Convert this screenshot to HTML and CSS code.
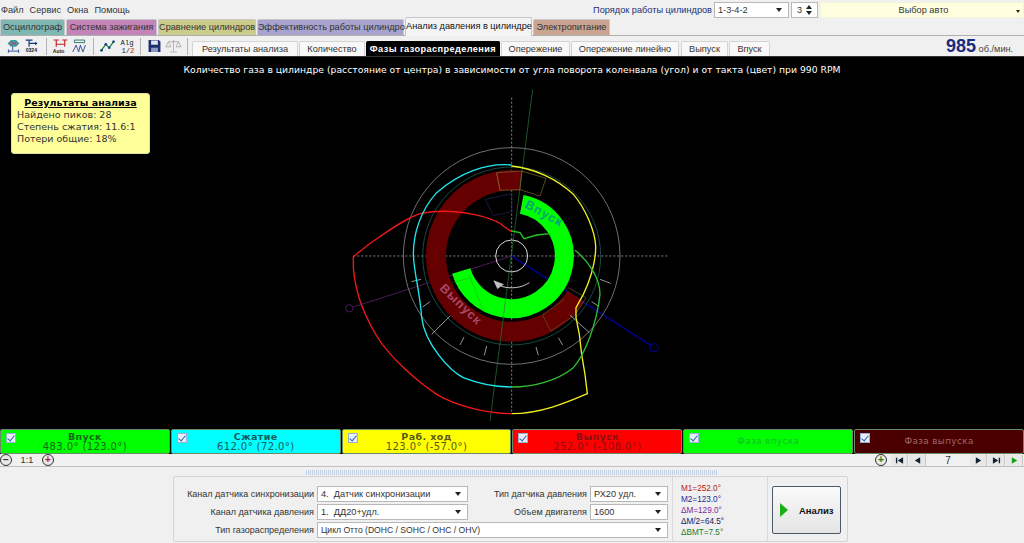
FILE: index.html
```html
<!DOCTYPE html>
<html lang="ru">
<head>
    <meta charset="UTF-8">
    <title>Анализ давления в цилиндре</title>
    <link rel="stylesheet" href="styles.css">
</head>
<body>
    <!-- menu + engine settings -->
    <div class="topbar">
        <div class="menu"><span>Файл</span><span>Сервис</span><span>Окна</span><span>Помощь</span></div>
        <div class="engine">
            <span class="engine-label">Порядок работы цилиндров</span>
            <div class="combo combo-order">1-3-4-2<i></i></div>
            <div class="spin">3<b class="spin-arrows"><i></i><i></i></b></div>
            <div class="combo combo-auto"><span>Выбор авто</span><i></i></div>
        </div>
    </div>

    <div class="tabs">
        <div class="tab t-teal">Осциллограф</div>
        <div class="tab t-pink">Система зажигания</div>
        <div class="tab t-khaki">Сравнение цилиндров</div>
        <div class="tab t-lilac">Эффективность работы цилиндров</div>
        <div class="tab t-active">Анализ давления в цилиндре</div>
        <div class="tab t-tan">Электропитание</div>
    </div>

    <div class="toolbar">
        <div class="tools">
            <svg class="tool" viewBox="0 0 20 18"><path d="M3 6 L7 2 H13 L17 6 L13 10 H7 Z" fill="#2fa59a"/><path d="M6 4 L14 8 M14 4 L6 8" stroke="#d03a8c"/><path d="M9 10v4M4 15h12M4 13v4M16 13v4" stroke="#1c3a8c" fill="none"/></svg>
            <svg class="tool" viewBox="0 0 20 18"><path d="M2 2h8M6 2v8M6 6h9" stroke="#123a8a" stroke-width="1.4" fill="none"/><path d="M13 4l3 2-3 2z" fill="#123a8a"/><text x="2" y="16" class="tool-text">0324</text></svg>
            <span class="tool-sep"></span>
            <svg class="tool" viewBox="0 0 20 18"><path d="M2 2h6M5 2v8M12 2h6M15 2v8M5 7h10" stroke="#c02020" stroke-width="1.3" fill="none"/><text x="1" y="17" class="tool-text">Auto</text></svg>
            <svg class="tool" viewBox="0 0 20 18"><path d="M4 2h12M4 5h12M4 2v3M16 2v3" stroke="#1a6a5a" fill="none"/><path d="M2 16l4-8 3 8 2-8 3 8 3-8" stroke="#1c3a8c" fill="none"/></svg>
            <span class="tool-sep"></span>
            <svg class="tool" viewBox="0 0 20 18"><path d="M2 15L8 7l4 4 6-8" stroke="#1a7a3a" stroke-width="1.4" fill="none"/><circle cx="3" cy="14" r="1.5" fill="#123a8a"/><circle cx="8" cy="7" r="1.5" fill="#123a8a"/><circle cx="12" cy="11" r="1.5" fill="#123a8a"/><circle cx="17" cy="4" r="1.5" fill="#123a8a"/></svg>
            <svg class="tool" viewBox="0 0 20 18"><text x="3" y="8" class="tool-alg">Alg</text><text x="4" y="17" class="tool-alg">1/<tspan fill="#c02020">2</tspan></text></svg>
            <span class="tool-sep"></span>
            <svg class="tool" viewBox="0 0 20 18"><path d="M3 2h12l2 2v12H3z" fill="#1c2f70"/><rect x="6" y="2.500" width="8" height="5" fill="#dfe6f2"/><rect x="6" y="11" width="8" height="5" fill="#8f9bbb"/></svg>
            <svg class="tool" viewBox="0 0 20 18"><path d="M10 2v13M6 16h8M4 4h12M4 4l-3 6h6zM16 4l-3 6h6z" stroke="#a8a8a8" fill="none"/></svg>
            <span class="tool-sep"></span>
        </div>
        <div class="subtabs">
            <div class="subtab st-results">Результаты анализа</div>
            <div class="subtab st-count">Количество</div>
            <div class="subtab st-phases">Фазы газораспределения</div>
            <div class="subtab st-adv">Опережение</div>
            <div class="subtab st-linear">Опережение линейно</div>
            <div class="subtab st-out">Выпуск</div>
            <div class="subtab st-in">Впуск</div>
        </div>
        <div class="rpm"><b>985</b> об./мин.</div>
    </div>

    <main class="chart">
        <div class="chart-title">Количество газа в цилиндре (расстояние от центра) в зависимости от угла поворота коленвала (угол) и от такта (цвет) при 990 RPM</div>

        <div class="note">
            <div class="note-title">Результаты анализа</div>
            <div>Найдено пиков: 28</div>
            <div>Степень сжатия: 11.6:1</div>
            <div>Потери общие: 18%</div>
        </div>

        <svg class="diagram" viewBox="0 56 1024 373">
            <!-- coordinates below are in 3x units, centre at 515,495 -->
            <g transform="translate(340 90) scale(.33333)" fill="none">
                <!-- axes and marker lines go under the rings -->
                <path d="M40 495 H985 M515 20 V968" stroke="#c8c8c8" stroke-width="2" stroke-dasharray="6 6"/>
                <path d="M515 495 L40 648" stroke="#4a1a5a" stroke-width="3"/>
                <circle cx="28" cy="652" r="11" stroke="#4a1a5a" stroke-width="3"/>
                <path d="M515 495 L932 763" stroke="#000080" stroke-width="5"/>
                <circle cx="942" cy="770" r="12" stroke="#000080" stroke-width="4"/>

                <!-- phase rings, drawn as dashes on a circle: pathLength is degrees -->
                <circle cx="515" cy="495" r="227" stroke="#640000" stroke-width="60" pathLength="360" stroke-dasharray="245 115" transform="rotate(32 515 495)"/>
                <circle cx="515" cy="495" r="158" stroke="#00ff00" stroke-width="57" pathLength="360" stroke-dasharray="242 118" transform="rotate(-79 515 495)"/>

                <circle cx="515" cy="495" r="325" stroke="#a8a8a8" stroke-width="2"/>
                <circle cx="515" cy="495" r="267" stroke="#2c6a60" stroke-width="2"/>
                <circle cx="515" cy="495" r="48" stroke="#d8d8d8" stroke-width="3"/>

                <path d="M470 245 L545 240 L618 262 L600 315 L540 296 L480 298 Z" stroke="#8a6a30" stroke-width="2"/>
                <path d="M470 245 L480 298 M545 240 L540 296" stroke="#8a5a30" stroke-width="2"/>
                <path d="M436 325 L515 308 L515 362 L460 374 Z" stroke="#26265e" stroke-width="2"/>
                <path d="M685 590 L738 620 L705 672 L632 720 L608 672 L672 625" stroke="#6a5a20" stroke-width="2"/>

                <path d="M578 -5 L450 990" stroke="#2a7a3a" stroke-width="2"/>
                <path d="M388 552 L430 660 M335 575 L395 560" stroke="#0aa00a" stroke-width="2" opacity=".6"/>

                <path d="M780 565 L812 577 M755 632 L775 645 M690 672 L748 725 M655 740 L668 762 M588 768 L595 793 M440 765 L433 793 M372 738 L360 762 M330 675 L275 730 M270 632 L248 648 M243 565 L215 572" stroke="#e0e0e0" stroke-width="2"/>

                <path d="M515 422 L490 405 C470 385 420 375 400 370 C360 362 300 355 240 368 C190 385 130 430 80 465 L40 497 L40 530 C45 590 60 650 110 735 C150 800 230 870 290 910 C350 945 440 968 515 968" stroke="#f01818" stroke-width="4"/>
                <path d="M515 225 C580 232 650 262 700 310 C735 350 765 420 767 465 C768 520 745 580 730 610 L708 650 L708 680 L718 730 L725 790 L735 850 L742 908 C680 935 600 968 515 968" stroke="#f0f020" stroke-width="4"/>
                <path d="M515 222 C440 215 360 245 290 305 C240 360 220 430 220 490 C222 550 240 600 245 680 C255 760 330 840 370 860 C420 880 470 888 515 888" stroke="#20e8f0" stroke-width="4"/>
                <path d="M515 888 C580 888 650 870 700 830 C735 790 770 700 780 610 C780 560 745 510 705 478" stroke="#30c030" stroke-width="4"/>
                <path d="M630 428 L590 432 L552 443 L540 425 L515 420" stroke="#20c820" stroke-width="4"/>

                <path d="M568 575 C545 590 515 595 484 586" stroke="#c8c8c8" stroke-width="3"/>
                <path d="M460 568 L492 580 L472 594 Z" fill="#c0c0c0"/>
            </g>
            <text class="ring-label label-in" transform="translate(524 206) rotate(29)">Впуск</text>
            <text class="ring-label label-out" transform="translate(439 288) rotate(44)">Выпуск</text>
        </svg>
    </main>

    <div class="legend">
        <div class="leg leg-green"><i class="check"></i><b>Впуск</b><span class="leg-val">483.0° (123.0°)</span></div>
        <div class="leg leg-cyan"><i class="check"></i><b>Сжатие</b><span class="leg-val">612.0° (72.0°)</span></div>
        <div class="leg leg-yellow"><i class="check"></i><b>Раб. ход</b><span class="leg-val">123.0° (-57.0°)</span></div>
        <div class="leg leg-red"><i class="check"></i><b>Выпуск</b><span class="leg-val">252.0° (-108.0°)</span></div>
        <div class="leg leg-phase leg-phase-in"><i class="check"></i><span>Фаза впуска</span></div>
        <div class="leg leg-phase leg-phase-out"><i class="check"></i><span>Фаза выпуска</span></div>
    </div>

    <div class="navbar">
        <div class="zoomer">
            <span class="zoom-btn">&minus;</span>
            <span class="zoom-val">1:1</span>
            <span class="zoom-btn plus">+</span>
        </div>
        <div class="player">
            <span class="zoom-btn plus">+</span>
            <span class="pl"><svg viewBox="0 0 10 10"><path d="M1 2h1.500v6H1zM9 1.500v7L3 5z"/></svg></span>
            <span class="pl"><svg viewBox="0 0 10 10"><path d="M8 1.500v7L2 5z"/></svg></span>
            <span class="pl-num">7</span>
            <span class="pl"><svg viewBox="0 0 10 10"><path d="M2 1.500v7L8 5z"/></svg></span>
            <span class="pl"><svg viewBox="0 0 10 10"><path d="M7.500 2H9v6H7.500zM1 1.500v7L7 5z"/></svg></span>
            <span class="pl pl-play"><svg viewBox="0 0 10 10"><path d="M2 1.500v7L8 5z"/></svg></span>
        </div>
    </div>

    <div class="bottom">
        <div class="splitter"></div>
        <div class="panel">
            <div class="form">
                <label>Канал датчика синхронизации</label>
                <div class="combo">4.&nbsp; Датчик синхронизации<i></i></div>
                <label>Тип датчика давления</label>
                <div class="combo">РХ20 удл.<i></i></div>
                <label>Канал датчика давления</label>
                <div class="combo">1.&nbsp; ДД20+удл.<i></i></div>
                <label>Объем двигателя</label>
                <div class="combo">1600<i></i></div>
                <label>Тип газораспределения</label>
                <div class="combo wide">Цикл Отто (DOHC / SOHC / OHC / OHV)<i></i></div>
            </div>
            <div class="marks">
                <div class="m-red">M1=252.0°</div>
                <div class="m-blue">M2=123.0°</div>
                <div class="m-purple">ΔM=129.0°</div>
                <div class="m-navy">ΔM/2=64.5°</div>
                <div class="m-green">ΔBMT=7.5°</div>
            </div>
            <div class="action">
                <button class="run"><i></i>Анализ</button>
            </div>
        </div>
    </div>
</body>
</html>
```

FILE: styles.css
```css
* {
    box-sizing: border-box;
}
html, body {
    height: 100%;
}
body {
    margin: 0;
    height: 543px;
    overflow: hidden;
    display: flex;
    flex-direction: column;
    background-color: #f0f0f0;
    font-family: "Liberation Sans", Arial, sans-serif;
    font-size: 9.2px;
    color: #333;
}

/* top row */
.topbar {
    height: 19px;
    display: flex;
    justify-content: space-between;
    align-items: center;
}
.menu {
    display: flex;
    gap: 6px;
    padding-left: 1px;
}
.engine {
    display: flex;
    align-items: center;
    gap: 2px;
}
.engine-label {
    color: #1c2f70;
}
.combo {
    position: relative;
    height: 16px;
    line-height: 14px;
    padding-left: 3px;
    background: white;
    border: 1px solid #b8b8b8;
    white-space: nowrap;
}
.combo i {
    position: absolute;
    right: 6px;
    top: 5px;
    border-left: 3px solid transparent;
    border-right: 3px solid transparent;
    border-top: 4px solid #222;
}
.combo-order {
    width: 75px;
}
.spin {
    width: 27px;
    height: 16px;
    line-height: 14px;
    padding-left: 5px;
    background: white;
    border: 1px solid #b8b8b8;
    position: relative;
}
.spin-arrows i {
    position: absolute;
    right: 5px;
    border-left: 3px solid transparent;
    border-right: 3px solid transparent;
}
.spin-arrows i:first-child {
    top: 2px;
    border-bottom: 4px solid #222;
}
.spin-arrows i:last-child {
    top: 8px;
    border-top: 4px solid #222;
}
.combo-auto {
    width: 204px;
    background: #ffffe0;
    border-color: #f4f4dc;
    text-align: center;
}
.combo-auto i {
    top: 7px;
    right: 3px;
    border-left-width: 2px;
    border-right-width: 2px;
    border-top-width: 3px;
}

/* main tabs */
.tabs {
    height: 17px;
    display: flex;
    gap: 1px;
    border-bottom: 1px solid #b0b0b0;
}
.tab {
    padding-top: 2px;
    text-align: center;
    border-radius: 2px 2px 0 0;
    border: 1px solid #c8c8c8;
    border-bottom: none;
    white-space: nowrap;
}
.t-teal { width: 65px; background: #7fb8b2; }
.t-pink { width: 91px; background: #c384b8; }
.t-khaki { width: 98px; background: #cbcb8c; }
.t-lilac { width: 147px; background: #a8a3cc; }
.t-active { width: 127px; height: 19px; margin-top: -2px; background: #f4f4f4; padding-top: 3px; color: #111; }
.t-tan { width: 77px; background: #c9a490; }

/* toolbar with sub tabs */
.toolbar {
    height: 20px;
    display: flex;
    align-items: flex-end;
    position: relative;
}
.tools {
    width: 192px;
    height: 20px;
    display: flex;
    align-items: center;
    padding-left: 5px;
    gap: 2px;
}
.tool {
    width: 17px;
    height: 18px;
    flex: none;
}
.tool-sep {
    width: 1px;
    height: 17px;
    margin: 0 3px;
    background: #b4b4b4;
    flex: none;
}
.tool-text {
    font-size: 6px;
    font-weight: bold;
    fill: #222;
}
.tool-alg {
    font-family: "Liberation Mono", monospace;
    font-size: 8.5px;
    fill: #222;
}
.subtabs {
    display: flex;
    gap: 1px;
}
.subtab {
    height: 15px;
    line-height: 14px;
    text-align: center;
    background: #f8f8f8;
    border: 1px solid #d4d4d4;
    border-bottom: none;
    border-radius: 2px 2px 0 0;
    white-space: nowrap;
}
.st-results { width: 106px; }
.st-count { width: 66px; }
.st-phases { width: 134px; background: black; color: white; font-weight: bold; border-color: black; letter-spacing: .4px; }
.st-adv { width: 69px; }
.st-linear { width: 108px; }
.st-out { width: 47px; margin-left: 1px; }
.st-in { width: 41px; }
.rpm {
    position: absolute;
    left: 946px;
    top: 0;
    line-height: 20px;
    color: #444;
}
.rpm b {
    font-size: 18px;
    color: #1a2a80;
}

/* chart */
.chart {
    position: relative;
    height: 373px;
    background: black;
    border-top: 1px solid #333;
}
.chart-title {
    padding-top: 7px;
    text-align: center;
    font-family: "DejaVu Sans", sans-serif;
    font-size: 9.26px;
    color: white;
    white-space: nowrap;
}
.note {
    position: absolute;
    left: 11px;
    top: 36px;
    width: 139px;
    height: 61px;
    padding: 3px 5px;
    background: #ffff99;
    border: 1px solid #e0e0a0;
    border-radius: 3px;
    font-family: "DejaVu Sans", sans-serif;
    font-size: 9.5px;
    line-height: 12px;
    color: #333;
}
.note-title {
    text-align: center;
    font-weight: bold;
    text-decoration: underline;
    color: black;
}
.diagram {
    position: absolute;
    left: 0;
    top: 0;
    width: 1024px;
    height: 373px;
}
.ring-label {
    font-family: "Liberation Sans", sans-serif;
    font-size: 12.5px;
    font-weight: bold;
    letter-spacing: 1px;
}
.label-in { fill: #00a078; }
.label-out { fill: #a84868; }

/* legend cells */
.legend {
    height: 25px;
    display: grid;
    grid-template-columns: repeat(6, 1fr);
    gap: 1px;
    background: black;
}
.leg {
    position: relative;
    display: flex;
    flex-direction: column;
    align-items: center;
    justify-content: center;
    font-family: "DejaVu Sans", sans-serif;
    font-size: 9.5px;
    line-height: 10px;
    letter-spacing: .4px;
    border: 1px solid #6a8a6a;
    border-radius: 2px;
}
.leg b {
    font-size: 9.5px;
}
.leg-val {
    font-size: 10px;
}
.leg-phase {
    font-size: 8.8px;
    padding-bottom: 2px;
}
.check {
    position: absolute;
    left: 5px;
    top: 3px;
    width: 10px;
    height: 10px;
    background: #e8eef8;
    border: 1px solid #9ab0d0;
}
.check::after {
    content: "";
    position: absolute;
    left: 2px;
    top: 0;
    width: 3px;
    height: 6px;
    border-right: 1.5px solid #2a60c0;
    border-bottom: 1.5px solid #2a60c0;
    transform: rotate(40deg);
}
.leg-green { background: #00ff00; color: #146a14; }
.leg-cyan { background: #00ffff; color: #145a5a; }
.leg-yellow { background: #ffff00; color: #5a5a14; }
.leg-red { background: #ff0000; color: #8a1010; }
.leg-phase-in { background: #00ff00; color: #12c02a; }
.leg-phase-out { background: #4a0000; color: #a06a6a; }

/* zoom + playback row */
.navbar {
    height: 13px;
    display: flex;
    justify-content: space-between;
    align-items: center;
    padding-right: 1px;
    border-bottom: 1px solid #c0c0c0;
}
.zoomer {
    display: flex;
    align-items: center;
}
.zoom-val {
    width: 30px;
    text-align: center;
}
.zoom-btn {
    width: 12px;
    height: 12px;
    line-height: 9px;
    text-align: center;
    font-weight: bold;
    font-size: 10px;
    border: 1px solid #333;
    border-radius: 50%;
    background: #e8e8e8;
}
.plus {
    color: #b01a1a;
}
.player .plus {
    color: #1a7a1a;
    margin-right: 3px;
}
.player {
    display: flex;
    align-items: center;
    gap: 1px;
}
.pl {
    width: 17px;
    height: 12px;
    display: flex;
    align-items: center;
    justify-content: center;
    background: #e8e8e8;
    border-right: 1px solid #c8c8c8;
}
.pl svg {
    width: 9px;
    height: 9px;
    fill: #123;
}
.pl-num {
    width: 42px;
    font-size: 10px;
    text-align: center;
}
.pl-play svg {
    fill: #14a014;
}

/* bottom panel */
.bottom {
    flex: 1;
    display: flex;
    flex-direction: column;
    align-items: center;
    padding-top: 3px;
}
.splitter {
    width: 411px;
    height: 5px;
    margin-left: -1px;
    background: repeating-linear-gradient(90deg, #c4d0e4 0 1px, #eef0f4 1px 2px);
}
.panel {
    width: 675px;
    height: 66px;
    margin: 1px 0 0 -3px;
    display: flex;
    border: 1px solid #d4d4d4;
    border-radius: 2px;
}
.form {
    width: 498px;
    padding: 9px 4px 0 0;
    display: grid;
    grid-template-columns: 140px 151px 116px 78px;
    grid-auto-rows: 16px;
    column-gap: 3px;
    row-gap: 2px;
    align-items: center;
}
.form label {
    text-align: right;
    white-space: nowrap;
    font-size: 9px;
}
.wide {
    grid-column: 2 / 5;
    font-size: 8.6px;
}
.marks {
    width: 95px;
    padding: 6px 0 0 8px;
    border-left: 1px solid #d8d8d8;
    font-size: 8.2px;
    line-height: 11px;
}
.m-red { color: #b02020; }
.m-blue { color: #202a90; }
.m-purple { color: #7a2a9a; }
.m-navy { color: #101a60; }
.m-green { color: #1a7a2a; }
.action {
    flex: 1;
    padding: 9px 0 0 4px;
    border-left: 1px solid #d8d8d8;
}
.run {
    width: 69px;
    height: 48px;
    display: flex;
    align-items: center;
    gap: 11px;
    padding: 0 0 0 7px;
    font-family: "Liberation Sans", sans-serif;
    font-size: 9.5px;
    font-weight: bold;
    color: #111;
    background: linear-gradient(#fafafa, #e4e4e4);
    border: 1px solid #4a5a6a;
    border-radius: 2px;
}
.run i {
    border-left: 8px solid #1ab01a;
    border-top: 7px solid transparent;
    border-bottom: 7px solid transparent;
}
```
